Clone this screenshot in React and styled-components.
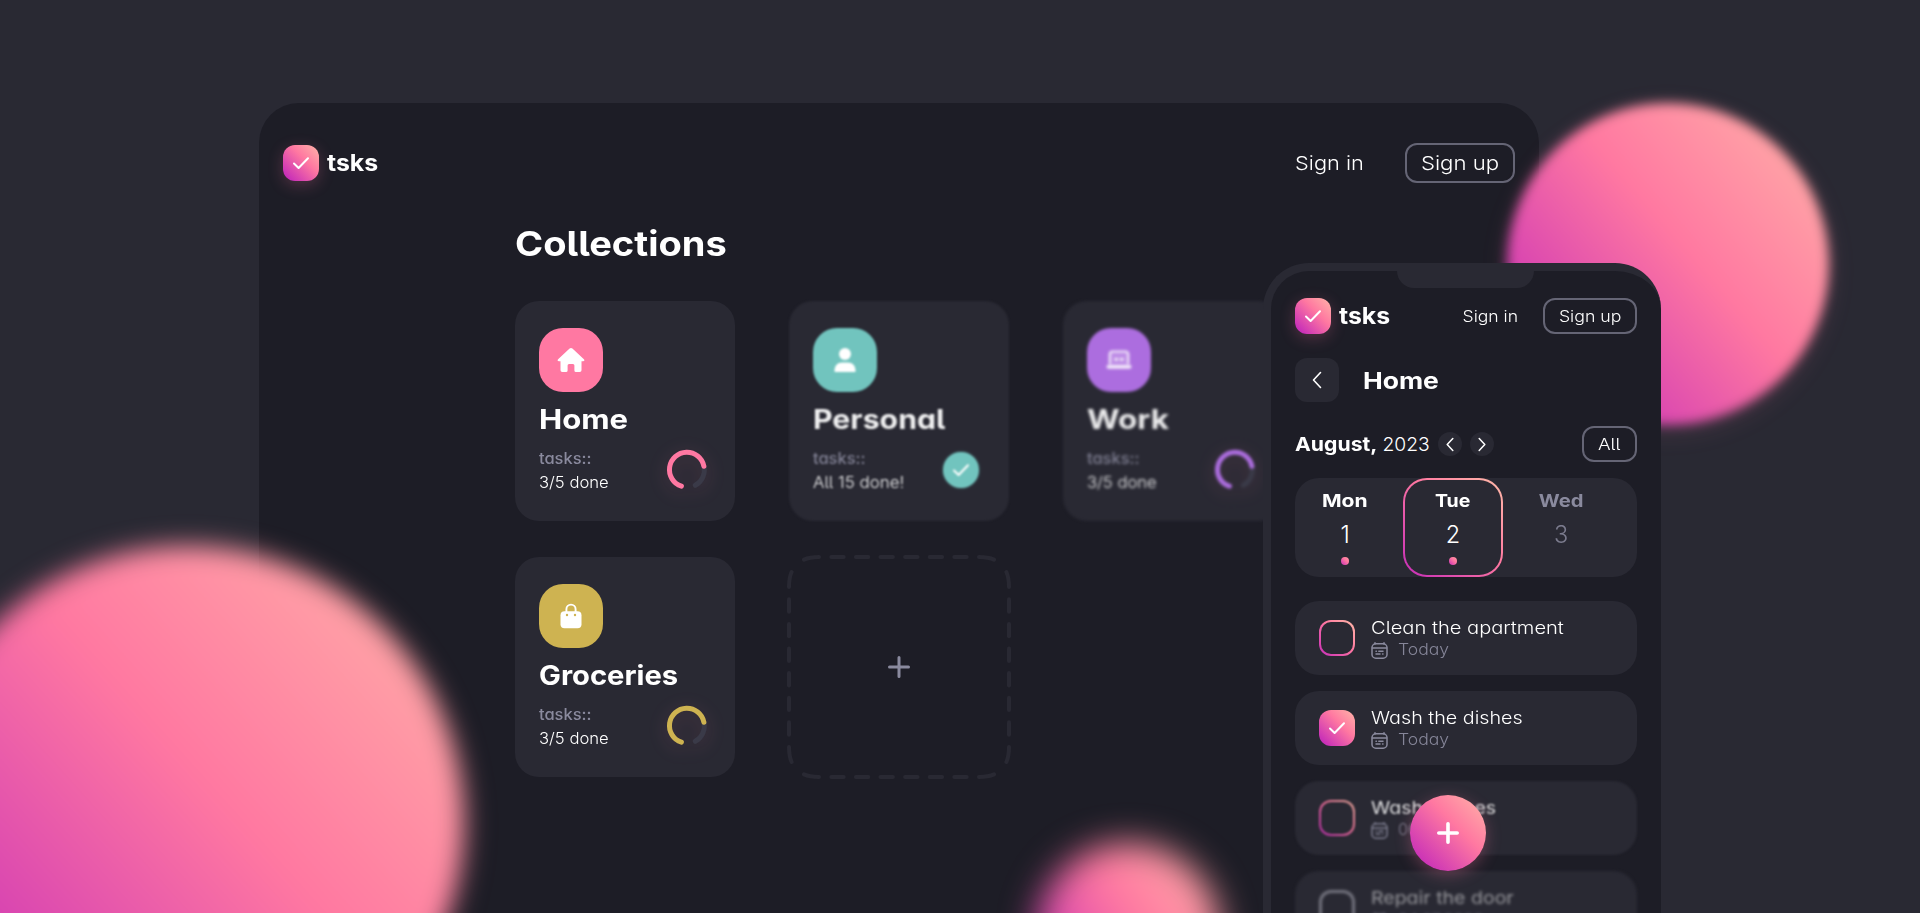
import React from "react";
import styled, { createGlobalStyle, css } from "styled-components";

const c = {
  page: "#292933",
  panel: "#1d1d26",
  muted: "#8a8a9e",
  line: "#656575",
  pink: "#ff78a2",
  teal: "#71c4be",
  purple: "#ac6ddf",
  gold: "#ceb351",
};
const gradient = "linear-gradient(45deg, #bb1ebd 0%, #ff78a1 60%, #ffb5a8 100%)";

const GlobalStyle = createGlobalStyle`
  *, *::before, *::after { box-sizing: border-box; }
  html, body { margin: 0; height: 100%; overflow: hidden; background: ${c.page}; }
  body {
    color: #fff;
    font-family: Inter, "Liberation Sans", sans-serif;
    font-feature-settings: "cv11", "cv05";
    -webkit-font-smoothing: antialiased;
  }
  h1, h2, h3, p { margin: 0; }
  button { font: inherit; color: inherit; background: none; border: 0; padding: 0; }
  svg { display: block; flex: none; }
`;

/* Widened lettering shared by every label */
const Wide = styled.span`
  display: inline-block;
  white-space: pre;
  transform: scaleX(${(p) => p.$x || 1});
  transform-origin: ${(p) => (p.$center ? "center" : "left")};
`;

const Scene = styled.main`
  position: relative;
  width: 1920px;
  height: 913px;
  overflow: hidden;
  background: ${c.page};
`;

const Orb = styled.div`
  position: absolute;
  left: ${(p) => p.$x - p.$r}px;
  top: ${(p) => p.$y - p.$r}px;
  width: ${(p) => p.$r * 2}px;
  height: ${(p) => p.$r * 2}px;
  border-radius: 50%;
  background: linear-gradient(${(p) => p.$angle}deg, #bb1ebd 0%, #ff78a1 55%, #ffb5a8 100%);
  filter: blur(${(p) => p.$blur}px);
  box-shadow: 0 6px 24px rgba(255, 120, 161, 0.14);
`;

const Desktop = styled.section`
  position: absolute;
  left: 259px;
  top: 103px;
  width: 1280px;
  height: 860px;
  padding: 40px 24px 0;
  border-radius: 40px;
  background: ${c.panel};
`;

const Phone = styled.section`
  position: absolute;
  left: 1263px;
  top: 263px;
  width: 398px;
  height: 760px;
  padding: 27px 24px 0;
  display: flex;
  flex-direction: column;
  border: solid ${c.page};
  border-width: 8px 0 0 8px;
  border-radius: 46px 46px 0 0;
  background: ${c.panel};
`;

const Notch = styled.div`
  position: absolute;
  left: 126px;
  top: -1px;
  width: 137px;
  height: 18px;
  border-radius: 0 0 17px 17px;
  background: ${c.page};
`;

const TopBar = styled.header`
  display: flex;
  align-items: center;
  height: ${(p) => p.$h}px;
`;

const Brand = styled.div`
  display: flex;
  align-items: center;
  gap: 8px;
  margin-right: auto;
  font-size: 23px;
  line-height: 36px;
  font-weight: 700;
`;

const Tile = styled.div`
  display: flex;
  align-items: center;
  justify-content: center;
  width: 36px;
  height: 36px;
  border-radius: 12px;
  background: ${gradient};
  box-shadow: ${(p) => (p.$glow ? "0 4px 16px rgba(255, 118, 161, 0.24)" : "none")};
`;

const NavLink = styled.a`
  font-weight: 300;
  font-size: ${(p) => (p.$small ? 15.4 : 19.3)}px;
  margin-right: ${(p) => (p.$small ? 28 : 45.5)}px;
`;

const OutlineButton = styled.button`
  width: ${(p) => p.$w}px;
  height: ${(p) => p.$h}px;
  border: 2px solid ${c.line};
  border-radius: 12px;
  font-weight: 300;
  font-size: ${(p) => p.$fs}px;
`;

const Collections = styled.div`
  padding-left: 232px;
`;

const Heading = styled.h1`
  margin-top: 38px;
  margin-bottom: 36px;
  font-size: 34.6px;
  line-height: 44px;
  font-weight: 700;
`;

const Grid = styled.div`
  display: grid;
  grid-template-columns: repeat(3, 220px);
  grid-auto-rows: 220px;
  gap: 36px 54px;
`;

const Card = styled.article`
  padding: 27px 24px 0;
  border-radius: 24px;
  background: ${c.page};
  filter: ${(p) => (p.$blur ? `blur(${p.$blur}px)` : "none")};
`;

const CardIcon = styled.div`
  display: flex;
  align-items: center;
  justify-content: center;
  width: 64px;
  height: 64px;
  border-radius: 24px;
  background: ${(p) => p.$color};
  svg { opacity: ${(p) => p.$dim}; }
`;

const CardTitle = styled.h2`
  margin: 10px 0 8.5px -0.5px;
  font-size: 27px;
  line-height: 36px;
  font-weight: 700;
  opacity: ${(p) => p.$dim};
`;

const CardFoot = styled.div`
  display: flex;
  align-items: center;
  justify-content: space-between;
  padding-right: 4px;
  font-size: 15.4px;
  line-height: 24px;
`;

const TaskLabel = styled.p`
  color: ${c.muted};
  font-weight: 500;
  opacity: ${(p) => p.$dim};
`;

const TaskCount = styled.p`
  font-weight: 300;
  opacity: ${(p) => p.$dim};
`;

const RingSvg = styled.svg`
  margin-bottom: 2px;
  overflow: visible;
  filter: drop-shadow(0 4px 9px rgba(255, 118, 161, 0.2));
`;

const Done = styled.div`
  display: flex;
  align-items: center;
  justify-content: center;
  width: 36px;
  height: 36px;
  margin: 0 2px 2px 0;
  border-radius: 50%;
  background: ${c.teal};
  box-shadow: 0 0 3px rgba(113, 196, 190, 0.4);
`;

const AddCard = styled.button`
  margin: -2px;
`;

const TitleRow = styled.div`
  display: flex;
  align-items: center;
  gap: 24px;
  height: 44px;
  margin-top: 24px;
`;

const ScreenTitle = styled.h2`
  font-size: 23px;
  line-height: 44px;
  font-weight: 700;
  padding-top: 1px;
`;

const BackButton = styled.button`
  display: flex;
  align-items: center;
  justify-content: center;
  width: 44px;
  height: 44px;
  border-radius: 12px;
  background: ${c.page};
`;

const MonthRow = styled.div`
  display: flex;
  align-items: center;
  height: 36px;
  margin-top: 24px;
  font-size: 19.3px;
`;

const Month = styled.strong`
  font-weight: 700;
  margin-right: 12.5px;
`;

const Year = styled.span`
  font-weight: 300;
  margin-right: auto;
`;

const Pager = styled.div`
  display: flex;
  gap: 8px;
  margin-left: 8px;
  margin-right: 88px;
`;

const PageButton = styled.button`
  display: flex;
  align-items: center;
  justify-content: center;
  width: 24px;
  height: 24px;
  border-radius: 50%;
  background: ${c.page};
`;

const Week = styled.div`
  display: flex;
  flex: none;
  gap: 8px;
  height: 99px;
  margin-top: 16px;
  border-radius: 24px;
  background: ${c.page};
`;

const gradientBorder = css`
  border: 2px solid transparent;
  background: linear-gradient(${c.page}, ${c.page}) padding-box,
    linear-gradient(45deg, #bb1ebd -10%, #ff78a1 56%, #ffb5a8 96%) border-box;
`;

const Day = styled.div`
  display: flex;
  flex-direction: column;
  align-items: center;
  width: 100px;
  padding-top: 9px;
  border: 2px solid transparent;
  border-radius: 24px;
  color: ${(p) => (p.$off ? c.muted : "#fff")};
  ${(p) => p.$active && gradientBorder}
`;

const DayName = styled.span`
  font-size: 17.3px;
  line-height: 24px;
  font-weight: 700;
`;

const DayNumber = styled.span`
  margin-top: 6px;
  margin-bottom: 1px;
  font-size: 23.5px;
  line-height: 32px;
  font-weight: 300;
  opacity: ${(p) => (p.$off ? 0.85 : 1)};
`;

const Dot = styled.i`
  width: 8px;
  height: 8px;
  margin-top: 5px;
  border-radius: 50%;
  background: linear-gradient(45deg, #c92fb6, #ff78a1 60%, #ff9aa4);
`;

const TaskList = styled.div`
  display: flex;
  flex-direction: column;
  gap: 16px;
  margin-top: 24px;
`;

const Task = styled.article`
  display: flex;
  align-items: center;
  flex: none;
  gap: 16px;
  height: 74px;
  padding-left: 24px;
  border-radius: 24px;
  background: ${c.page};
  filter: ${(p) => (p.$blur ? `blur(${p.$blur}px)` : "none")};
  > * { opacity: ${(p) => p.$dim || 1}; }
`;

const Checkbox = styled.div`
  width: 36px;
  height: 36px;
  border-radius: 12px;
  ${gradientBorder}
  ${(p) => p.$soft && css`border-width: 2.6px;`}
  ${(p) => p.$gray && css`background: none; border: 3px solid #c0c0cc;`}
`;

const TaskText = styled.div`
  padding-top: 2px;
`;

const TaskName = styled.h3`
  font-size: 17.3px;
  line-height: 22px;
  font-weight: ${(p) => (p.$soft ? 400 : 300)};
`;

const TaskDate = styled.p`
  display: flex;
  align-items: center;
  gap: 9.5px;
  font-size: 15.4px;
  line-height: 22px;
  font-weight: 300;
  color: #858598;
`;

const Fab = styled.button`
  position: absolute;
  left: 1410px;
  top: 795px;
  display: flex;
  align-items: center;
  justify-content: center;
  width: 76px;
  height: 76px;
  border-radius: 50%;
  background: ${gradient};
  box-shadow: 0 4px 16px rgba(255, 118, 161, 0.3);
`;

const Check = () => (
  <svg width="18" height="14" viewBox="0 0 18 14" fill="none" stroke="#fff" strokeWidth="2" strokeLinecap="round" strokeLinejoin="round">
    <path d="M2 7.5 6.6 12 16 2.3" />
  </svg>
);

const Chevron = ({ flip, w = 10, h = 18 }) => (
  <svg width={w} height={h} viewBox="0 0 10 18" fill="none" stroke="#fff" strokeWidth={(18 / h) * 1.6} strokeLinecap="round" strokeLinejoin="round">
    <path d={flip ? "M1.5 1.5 8.5 9l-7 7.5" : "M8.5 1.5 1.5 9l7 7.5"} />
  </svg>
);

const Plus = ({ color, weight }) => (
  <svg width="22" height="22" viewBox="0 0 22 22" stroke={color} strokeWidth={weight} strokeLinecap="round">
    <path d="M11 1.8v18.4M1.8 11h18.4" />
  </svg>
);

const HouseIcon = () => (
  <svg width="28" height="26" viewBox="0 0 28 26" fill="#fff">
    <path d="M12.6 1.6a2 2 0 0 1 2.8 0l11.500 10.700c1 1 .4 2-.8 2h-1.600v8.900a1.800 1.800 0 0 1-1.800 1.800h-3.700a1.600 1.600 0 0 1-1.600-1.600v-4.600c0-1.100-.5-1.800-1.500-1.800h-3.800c-1 0-1.500.7-1.500 1.800v4.600a1.600 1.600 0 0 1-1.600 1.600H5.300a1.800 1.800 0 0 1-1.800-1.800v-8.900H1.900c-1.200 0-1.800-1-.8-2z" />
  </svg>
);

const UserIcon = () => (
  <svg width="22" height="26" viewBox="0 0 22 26" fill="#fff">
    <circle cx="11" cy="7" r="6" />
    <path d="M1.6 25C.8 25 .4 24.6.4 23.8.6 18.5 3.6 15.5 8 15.5h6c4.400 0 7.400 3 7.600 8.300 0 .8-.4 1.200-1.200 1.200z" />
  </svg>
);

const LaptopIcon = () => (
  <svg width="26" height="20" viewBox="0 0 26 20" fill="none" stroke="#fff">
    <path d="M3.8 14V4.200A2.700 2.700 0 0 1 6.500 1.500h13a2.700 2.700 0 0 1 2.700 2.700V14" strokeWidth="2.200" fill="#fff" fillOpacity=".25" />
    <path d="M2.500 16.800h21" strokeWidth="4" strokeLinecap="round" />
    <path d="M9.500 9.300h1.500M15 9.300h1.500" strokeWidth="2.800" strokeLinecap="round" />
  </svg>
);

const BagIcon = () => (
  <svg width="22" height="26" viewBox="0 0 22 26">
    <path d="M6.400 11V6.200a4.600 4.600 0 0 1 9.200 0V11" fill="none" stroke="#fff" strokeWidth="1.900" />
    <rect x=".5" y="8.300" width="21" height="16.900" rx="4" fill="#fff" />
    <circle cx="7" cy="12" r="1.200" fill={c.gold} />
    <circle cx="15" cy="12" r="1.200" fill={c.gold} />
  </svg>
);

const CalendarIcon = () => (
  <svg width="17" height="17" viewBox="0 0 17 17" fill="none" stroke={c.muted} strokeWidth="1.500" strokeLinecap="round">
    <rect x="1" y="1.800" width="15" height="14.400" rx="3.800" />
    <path d="M1.400 6h14.200M4 .8v1.200M13 .8v1.200M5 9.200h.4M7.800 9.200h4.200M5 12h4M11.600 12h.4" />
  </svg>
);

const Ring = ({ color }) => (
  <RingSvg width="40" height="40" viewBox="0 0 40 40" fill="none" strokeWidth="5" strokeLinecap="round">
    <path d="M36.900 16.200A17.400 17.400 0 0 1 28.300 35.300" stroke="#3a3a48" />
    <path d="M14.400 36.200A17.400 17.400 0 1 1 36.900 16.200" stroke={color} />
  </RingSvg>
);

const dashes = [44.3, 68.9, 93.5, 118.1, 142.7, 167.3];
const DashedFrame = () => (
  <svg width="224" height="224" viewBox="0 0 224 224" fill="none" stroke={c.page} strokeWidth="4" strokeLinecap="round">
    {[0, 90, 180, 270].map((a) => (
      <g key={a} transform={`rotate(${a} 112 112)`}>
        <path d="M17 4.600Q22.500 2.100 32 2M207 4.600Q201.500 2.100 192 2" />
        {dashes.map((x) => <path key={x} d={`M${x} 2h12.400`} />)}
      </g>
    ))}
    <path d="M102.500 112h19M112 102.500v19" stroke={c.muted} strokeWidth="3" />
  </svg>
);

const cards = [
  { title: "Home", x: 1.15, color: c.pink, icon: <HouseIcon />, count: "3/5 done", cx: 1.08 },
  { title: "Personal", x: 1.12, color: c.teal, icon: <UserIcon />, count: "All 15 done!", cx: 1.1, done: true, blur: 0.8, dim: 0.92 },
  { title: "Work", x: 1.165, color: c.purple, icon: <LaptopIcon />, count: "3/5 done", cx: 1.08, blur: 1.4, dim: 0.9 },
  { title: "Groceries", x: 1.08, color: c.gold, icon: <BagIcon />, count: "3/5 done", cx: 1.08 },
];

const tasks = [
  { name: "Clean the apartment", x: 1.163, date: "Today", dx: 1.14 },
  { name: "Wash the dishes", x: 1.142, date: "Today", dx: 1.14, checked: true },
  { name: "Wash clothes", x: 1.13, date: "06.07.2023", dx: 1.06, blur: 0.8, dim: 0.85 },
  { name: "Repair the door", x: 1.13, date: "04.07.2023", dx: 1.06, blur: 1.4, dim: 0.5, gray: true },
];

const Logo = () => (
  <Brand>
    <Tile $glow><Check /></Tile>
    <Wide $x={1.08}>tsks</Wide>
  </Brand>
);

export default function App() {
  return (
    <>
      <GlobalStyle />
      <Scene>
        <Desktop>
          <TopBar $h={40}>
            <Logo />
            <NavLink><Wide $x={1.13} $center>Sign in</Wide></NavLink>
            <OutlineButton $w={110} $h={40} $fs={19.3}><Wide $x={1.15} $center>Sign up</Wide></OutlineButton>
          </TopBar>
          <Collections>
            <Heading><Wide $x={1.1}>Collections</Wide></Heading>
            <Grid>
              {cards.map((k) => (
                <Card key={k.title} $blur={k.blur}>
                  <CardIcon $color={k.color} $dim={k.blur > 1 ? 0.85 : 1}>{k.icon}</CardIcon>
                  <CardTitle $dim={k.dim || 1}><Wide $x={k.x}>{k.title}</Wide></CardTitle>
                  <CardFoot>
                    <div>
                      <TaskLabel $dim={k.dim || 1}><Wide $x={1.07}>tasks::</Wide></TaskLabel>
                      <TaskCount $dim={k.dim || 1}><Wide $x={k.cx}>{k.count}</Wide></TaskCount>
                    </div>
                    {k.done ? <Done><Check /></Done> : <Ring color={k.color} />}
                  </CardFoot>
                </Card>
              ))}
              <AddCard><DashedFrame /></AddCard>
            </Grid>
          </Collections>
        </Desktop>

        <Orb $x={188} $y={822} $r={276} $blur={13} $angle={48} />
        <Orb $x={1667.5} $y={263.5} $r={161} $blur={6} $angle={49} />
        <Orb $x={1128} $y={935} $r={92} $blur={17} $angle={55} />

        <Phone>
          <Notch />
          <TopBar $h={36}>
            <Logo />
            <NavLink $small><Wide $x={1.14} $center>Sign in</Wide></NavLink>
            <OutlineButton $w={94} $h={36} $fs={15.4}><Wide $x={1.15} $center>Sign up</Wide></OutlineButton>
          </TopBar>
          <TitleRow>
            <BackButton><Chevron /></BackButton>
            <ScreenTitle><Wide $x={1.15}>Home</Wide></ScreenTitle>
          </TitleRow>
          <MonthRow>
            <Month><Wide $x={1.1}>August,</Wide></Month>
            <Year>2023</Year>
            <Pager>
              <PageButton><Chevron w={8} h={15} /></PageButton>
              <PageButton><Chevron flip w={8} h={15} /></PageButton>
            </Pager>
            <OutlineButton $w={55} $h={36} $fs={15.4}><Wide $x={1.22} $center>All</Wide></OutlineButton>
          </MonthRow>
          <Week>
            <Day>
              <DayName><Wide $x={1.22} $center>Mon</Wide></DayName>
              <DayNumber>1</DayNumber>
              <Dot />
            </Day>
            <Day $active>
              <DayName><Wide $x={1.13} $center>Tue</Wide></DayName>
              <DayNumber>2</DayNumber>
              <Dot />
            </Day>
            <Day $off>
              <DayName><Wide $x={1.17} $center>Wed</Wide></DayName>
              <DayNumber $off>3</DayNumber>
            </Day>
          </Week>
          <TaskList>
            {tasks.map((t) => (
              <Task key={t.name} $blur={t.blur} $dim={t.dim}>
                {t.checked ? <Tile><Check /></Tile> : <Checkbox $soft={!!t.blur} $gray={t.gray} />}
                <TaskText>
                  <TaskName $soft={!!t.blur}><Wide $x={t.x}>{t.name}</Wide></TaskName>
                  <TaskDate><CalendarIcon /><Wide $x={t.dx}>{t.date}</Wide></TaskDate>
                </TaskText>
              </Task>
            ))}
          </TaskList>
        </Phone>
        <Fab><Plus color="#fff" weight={3.6} /></Fab>
      </Scene>
    </>
  );
}
